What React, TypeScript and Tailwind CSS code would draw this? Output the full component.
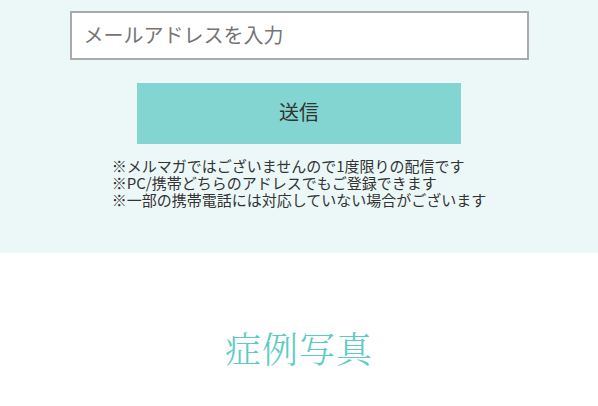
export default function App() {
  return (
    <div className="w-[598px] h-[406px] overflow-hidden bg-white" style={{ fontFamily: '"Noto Sans CJK JP", "Noto Sans", sans-serif' }}>
      {/* Form band */}
      <div className="bg-[#ecf8f8] h-[253px] pt-[11px]">
        <div className="mx-auto w-[459px] h-[49px] border-2 border-[#aaaaaa] bg-white flex items-center px-[12px] pb-[2px]">
          <input
            type="text"
            placeholder="メールアドレスを入力"
            className="w-full bg-transparent outline-none text-[20px] text-[#333] placeholder:text-[#757575]"
          />
        </div>
        <button className="block mx-auto mt-[23px] w-[324px] h-[61px] pb-[4px] bg-[#82d5d0] text-[20px] text-[#333]">
          送信
        </button>
        <div className="mx-auto mt-[13px] w-fit text-left text-[15px] leading-[17px] text-[#333]">
          <p>※メルマガではございませんので1度限りの配信です</p>
          <p>※PC/携帯どちらのアドレスでもご登録できます</p>
          <p>※一部の携帯電話には対応していない場合がございます</p>
        </div>
      </div>

      {/* Section heading */}
      <div className="pt-[71px] text-center">
        <h2
          className="text-[36px] leading-[48px] font-light text-[#5ccbc4] tracking-[1px]"
          style={{ fontFamily: '"Noto Serif CJK JP", "Noto Sans CJK JP", serif' }}
        >
          症例写真
        </h2>
      </div>
    </div>
  );
}
